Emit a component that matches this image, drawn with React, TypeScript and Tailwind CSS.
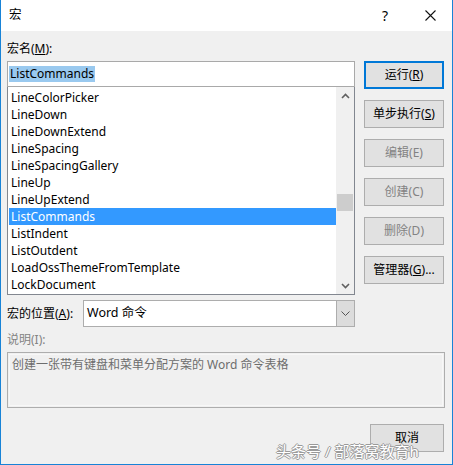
import React from 'react';

const macros = [
  'LineColorPicker',
  'LineDown',
  'LineDownExtend',
  'LineSpacing',
  'LineSpacingGallery',
  'LineUp',
  'LineUpExtend',
  'ListCommands',
  'ListIndent',
  'ListOutdent',
  'LoadOssThemeFromTemplate',
  'LockDocument',
];

const font = "font-['Noto_Sans','Noto_Sans_CJK_SC',sans-serif]";

function Chevron({ up = false }: { up?: boolean }) {
  return (
    <svg width="9" height="6" viewBox="0 0 9 6" className="block">
      <polyline
        points={up ? '1,5 4.5,1.5 8,5' : '1,1 4.5,4.5 8,1'}
        fill="none"
        stroke="#606060"
        strokeWidth="1.6"
      />
    </svg>
  );
}

function DialogButton({
  children,
  primary = false,
  disabled = false,
}: {
  children: React.ReactNode;
  primary?: boolean;
  disabled?: boolean;
}) {
  return (
    <div
      className={`w-[80px] h-[28px] flex items-center justify-center bg-[#e1e1e1] text-[12px] ${
        primary ? 'border-2 border-[#0078d7]' : 'border border-[#adadad]'
      } ${disabled ? 'text-[#838383]' : 'text-black'}`}
    >
      {children}
    </div>
  );
}

export default function App() {
  return (
    <div className={`${font} w-[453px] h-[465px] flex flex-col bg-[#f0f0f0] border-x border-b border-[#1883d7] relative overflow-hidden`}>
      {/* title bar */}
      <div className="h-[31px] shrink-0 bg-white flex items-center">
        <span className="pl-[8px] text-[12.5px] text-black flex-1">宏</span>
        <span className="w-[46px] text-center text-[14px] text-black">?</span>
        <span className="w-[44px] flex justify-center">
          <svg width="11" height="11" viewBox="0 0 11 11">
            <path d="M0.5 0.5 L10.5 10.5 M10.5 0.5 L0.5 10.5" stroke="#111" strokeWidth="1.1" />
          </svg>
        </span>
      </div>

      {/* body */}
      <div className="flex flex-col pl-[6px] pt-[10px] text-[12px] text-black">
        <div className="h-[16px] leading-[16px]">
          宏名(<span className="underline">M</span>):
        </div>

        <div className="flex mt-[4px]">
          <div className="w-[348px] flex flex-col">
            <div className="h-[26px] bg-white border border-[#a9a9a9] flex items-center px-[1px]">
              <span className="bg-[#99c9ef] px-[1px] leading-[16px]">ListCommands</span>
            </div>
            <div className="h-[208px] bg-white border border-[#828790] border-t-0 flex">
              <div className="flex-1 flex flex-col pt-[2px] pl-[1px]">
                {macros.map((m) => (
                  <div
                    key={m}
                    className={`h-[17px] leading-[17px] pl-[2px] ${
                      m === 'ListCommands' ? 'bg-[#3399ff] text-white' : ''
                    }`}
                  >
                    {m}
                  </div>
                ))}
              </div>
              <div className="w-[18px] bg-[#f0f0f0] flex flex-col items-center">
                <div className="h-[17px] flex items-center justify-center">
                  <Chevron up />
                </div>
                <div className="flex-1 w-full px-[1px] pt-[90px]">
                  <div className="h-[17px] bg-[#cdcdcd]" />
                </div>
                <div className="h-[17px] flex items-center justify-center">
                  <Chevron />
                </div>
              </div>
            </div>
          </div>

          <div className="ml-[9px] flex flex-col gap-[11px]">
            <DialogButton primary>
              运行(<span className="underline">R</span>)
            </DialogButton>
            <DialogButton>
              单步执行(<span className="underline">S</span>)
            </DialogButton>
            <DialogButton disabled>编辑(E)</DialogButton>
            <DialogButton disabled>创建(C)</DialogButton>
            <DialogButton disabled>删除(D)</DialogButton>
            <DialogButton>
              管理器(<span className="underline">G</span>)...
            </DialogButton>
          </div>
        </div>

        {/* location row */}
        <div className="flex items-center mt-[5px] h-[27px]">
          <div className="w-[76px]">
            宏的位置(<span className="underline">A</span>):
          </div>
          <div className="w-[272px] h-[27px] flex border border-[#adadad] bg-white">
            <div className="flex-1 flex items-center pl-[3px] text-[12.5px]">Word 命令</div>
            <div className="w-[18px] bg-[#dcdcdc] border-l border-[#adadad] flex items-center justify-center">
              <svg width="9" height="5" viewBox="0 0 9 5">
                <polyline points="0.5,0.5 4.5,4.5 8.5,0.5" fill="none" stroke="#555" strokeWidth="1" />
              </svg>
            </div>
          </div>
        </div>

        <div className="mt-[5px] h-[16px] leading-[16px] text-[#838383]">说明(I):</div>

        <div className="mt-[4px] w-[438px] h-[56px] border border-[#adadad] p-[1px]">
          <div className="h-full border border-[#f7f7f7] px-[2px] pt-[2px] text-[#6d6d6d] leading-[16px]">
            创建一张带有键盘和菜单分配方案的 Word 命令表格
          </div>
        </div>

        <div className="mt-[16px] flex justify-end w-[438px] pr-[1px]">
          <div className="w-[74px] h-[28px] bg-[#e1e1e1] border border-[#adadad] flex items-center justify-center">
            取消
          </div>
        </div>
      </div>

      {/* watermark */}
      <div className="absolute left-[275px] top-[441px] text-[15px] leading-[20px] text-white [text-shadow:1px_0_#9a9a9a,-1px_0_#9a9a9a,0_1px_#9a9a9a,0_-1px_#9a9a9a]">
        头条号 / 部落窝教育h
      </div>
    </div>
  );
}
